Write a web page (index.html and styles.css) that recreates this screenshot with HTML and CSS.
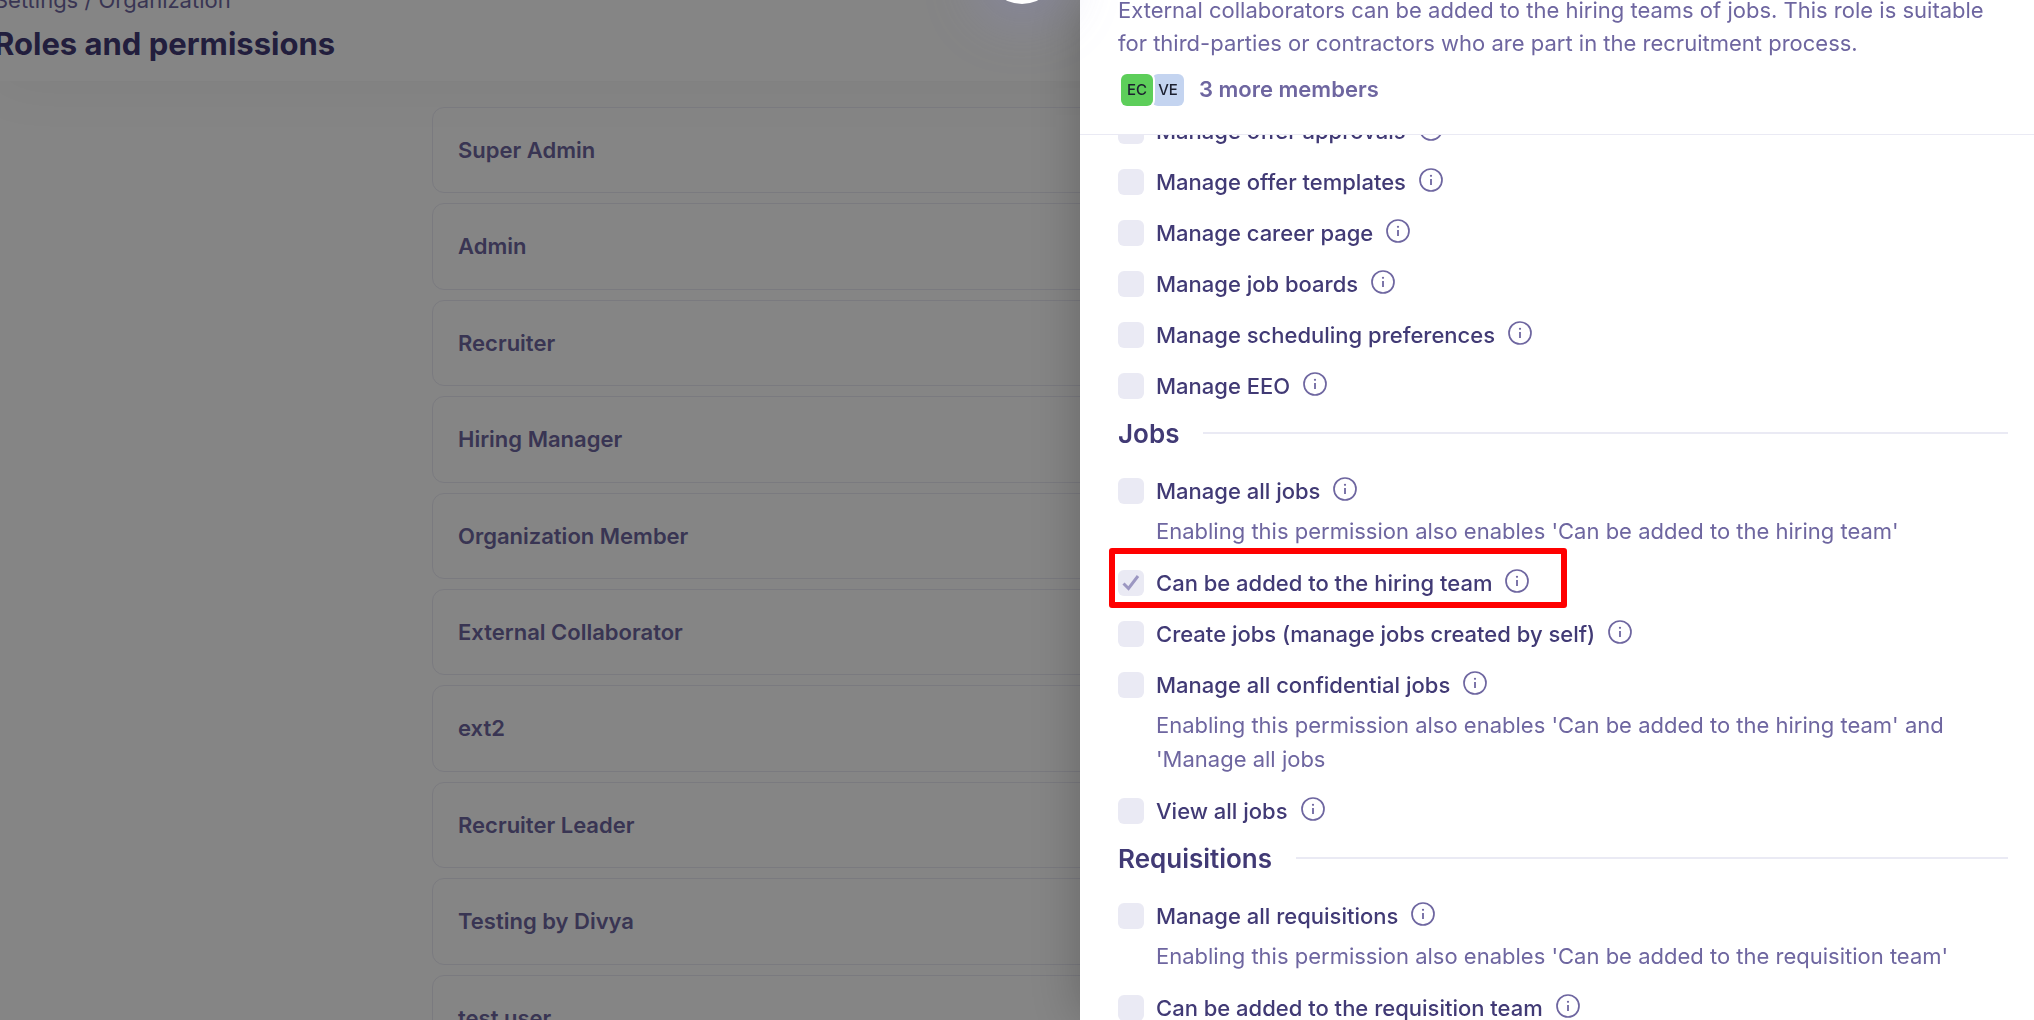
FILE: index.html
```html
<!DOCTYPE html>
<html lang="en">
<head>
  <meta charset="UTF-8" />
  <meta name="viewport" content="width=device-width, initial-scale=1.0" />
  <title>Roles and permissions</title>

  <link rel="stylesheet" href="styles.css">
</head>

<body>
  <svg class="sprite" aria-hidden="true">
    <symbol id="info" viewBox="0 0 24 24">
      <circle cx="12" cy="12" r="11" fill="none" stroke="currentColor" stroke-width="1.7" />
      <circle cx="12" cy="7.8" r="1.1" fill="currentColor" />
      <path d="M12 11v6" fill="none" stroke="currentColor" stroke-width="1.8" />
    </symbol>
  </svg>

  <div class="page">
    <header class="page-header">
      <nav class="breadcrumb"><a href="#">Settings</a> / <a href="#">Organization</a></nav>
      <h1>Roles and permissions</h1>
    </header>

    <main class="role-list">
      <a class="role-card" href="#">Super Admin</a>
      <a class="role-card" href="#">Admin</a>
      <a class="role-card" href="#">Recruiter</a>
      <a class="role-card" href="#">Hiring Manager</a>
      <a class="role-card" href="#">Organization Member</a>
      <a class="role-card" href="#">External Collaborator</a>
      <a class="role-card" href="#">ext2</a>
      <a class="role-card" href="#">Recruiter Leader</a>
      <a class="role-card" href="#">Testing by Divya</a>
      <a class="role-card" href="#">test user</a>
    </main>
  </div>

  <div class="overlay">
    <aside class="drawer">
      <button class="close-button" aria-label="Close"></button>

      <header class="drawer-header">
        <p>External collaborators can be added to the hiring teams of jobs. This role is suitable for third-parties or contractors who are part in the recruitment process.</p>
        <div class="members">
          <span class="avatar avatar-green">EC</span>
          <span class="avatar avatar-blue">VE</span>
          <a class="more-members" href="#">3 more members</a>
        </div>
      </header>

      <div class="permissions">
        <div class="permission">
          <input type="checkbox" id="offer-approvals" disabled>
          <label for="offer-approvals">Manage offer approvals</label>
          <svg class="info"><use href="#info" /></svg>
        </div>
        <div class="permission">
          <input type="checkbox" id="offer-templates" disabled>
          <label for="offer-templates">Manage offer templates</label>
          <svg class="info"><use href="#info" /></svg>
        </div>
        <div class="permission">
          <input type="checkbox" id="career-page" disabled>
          <label for="career-page">Manage career page</label>
          <svg class="info"><use href="#info" /></svg>
        </div>
        <div class="permission">
          <input type="checkbox" id="job-boards" disabled>
          <label for="job-boards">Manage job boards</label>
          <svg class="info"><use href="#info" /></svg>
        </div>
        <div class="permission">
          <input type="checkbox" id="scheduling" disabled>
          <label for="scheduling">Manage scheduling preferences</label>
          <svg class="info"><use href="#info" /></svg>
        </div>
        <div class="permission">
          <input type="checkbox" id="eeo" disabled>
          <label for="eeo">Manage EEO</label>
          <svg class="info"><use href="#info" /></svg>
        </div>

        <h2>Jobs</h2>
        <div class="permission">
          <input type="checkbox" id="all-jobs" disabled>
          <label for="all-jobs">Manage all jobs</label>
          <svg class="info"><use href="#info" /></svg>
        </div>
        <p class="hint">Enabling this permission also enables 'Can be added to the hiring team'</p>
        <div class="permission highlighted">
          <input type="checkbox" id="hiring-team" checked disabled>
          <label for="hiring-team">Can be added to the hiring team</label>
          <svg class="info"><use href="#info" /></svg>
        </div>
        <div class="permission">
          <input type="checkbox" id="create-jobs" disabled>
          <label for="create-jobs">Create jobs (manage jobs created by self)</label>
          <svg class="info"><use href="#info" /></svg>
        </div>
        <div class="permission">
          <input type="checkbox" id="confidential-jobs" disabled>
          <label for="confidential-jobs">Manage all confidential jobs</label>
          <svg class="info"><use href="#info" /></svg>
        </div>
        <p class="hint">Enabling this permission also enables 'Can be added to the hiring team' and 'Manage all jobs</p>
        <div class="permission">
          <input type="checkbox" id="view-jobs" disabled>
          <label for="view-jobs">View all jobs</label>
          <svg class="info"><use href="#info" /></svg>
        </div>

        <h2>Requisitions</h2>
        <div class="permission">
          <input type="checkbox" id="all-requisitions" disabled>
          <label for="all-requisitions">Manage all requisitions</label>
          <svg class="info"><use href="#info" /></svg>
        </div>
        <p class="hint">Enabling this permission also enables 'Can be added to the requisition team'</p>
        <div class="permission">
          <input type="checkbox" id="requisition-team" disabled>
          <label for="requisition-team">Can be added to the requisition team</label>
          <svg class="info"><use href="#info" /></svg>
        </div>
      </div>
    </aside>
  </div>
</body>
</html>
```

FILE: styles.css
```css
:root {
  --text-dark: #413a75;
  --text-muted: #6e66a0;
  --line: #eaeaf4;
}

* {
  box-sizing: border-box;
}

body {
  margin: 0;
  height: 100vh;
  overflow: hidden;
  background: #fff;
  color: var(--text-muted);
  font-family: Inter, sans-serif;
  font-size: 22px;
}

a {
  color: inherit;
  text-decoration: none;
}

h1, h2, p {
  margin: 0;
}

.sprite {
  display: none;
}

/* page behind the drawer */
.page-header {
  margin: -16px 0 0 -6px;
  padding-bottom: 13px;
  box-shadow: 0 4px 60px rgba(0, 0, 0, 0.05);
}

.breadcrumb {
  line-height: 33px;
}

h1 {
  margin-top: 3px;
  color: var(--text-dark);
  font-size: 31px;
  font-weight: 700;
  line-height: 48px;
}

.role-list {
  display: flex;
  flex-direction: column;
  gap: 10px;
  max-width: 1170px;
  margin: 26px auto 0;
}

.role-card {
  padding: 29px 25px;
  border: 1px solid var(--line);
  border-radius: 12px;
  font-weight: 600;
  line-height: 1.2;
}

/* drawer */
.overlay {
  position: fixed;
  inset: 0;
  display: flex;
  justify-content: flex-end;
  background: rgba(0, 0, 0, 0.48);
}

.drawer {
  position: relative;
  display: flex;
  flex-direction: column;
  width: 954px;
  background: #fff;
  box-shadow: 0 0 50px rgba(0, 0, 0, 0.25);
}

.close-button {
  position: absolute;
  top: -72px;
  left: -96px;
  width: 76px;
  height: 76px;
  border: none;
  border-radius: 50%;
  background: #fff;
  box-shadow: 0 10px 60px rgba(140, 140, 220, 0.4);
}

.drawer-header {
  margin-top: -6px;
  padding: 0 20px 28px 38px;
  border-bottom: 1px solid var(--line);
  line-height: 33px;
}

.members {
  display: flex;
  align-items: center;
  margin-top: 13px;
  padding-left: 3px;
}

.avatar {
  width: 32px;
  height: 32px;
  border-radius: 6px;
  color: #1c2030;
  font-size: 15px;
  font-weight: 500;
  line-height: 32px;
  text-align: center;
}

.avatar-green {
  z-index: 1;
  background: #5dce5a;
  box-shadow: 0 0 0 2px #fff;
}

.avatar-blue {
  margin-left: -1px;
  background: #c4d4f0;
}

.more-members {
  margin-left: 15px;
  font-weight: 600;
}

.permissions {
  flex: 1;
  overflow: hidden;
  padding: 0 26px 0 38px;
}

.permission {
  display: flex;
  align-items: center;
  height: 26px;
  margin-bottom: 25px;
  color: var(--text-dark);
  font-weight: 500;
}

/* list is scrolled, the first row is partly hidden */
.permission:first-child {
  margin-top: -17px;
}

.permission input {
  appearance: none;
  width: 26px;
  height: 26px;
  margin: 0 12px 0 0;
  border-radius: 6px;
  background: var(--line);
}

.permission input:checked {
  background: var(--line) url("data:image/svg+xml,%3Csvg xmlns='http://www.w3.org/2000/svg' viewBox='0 0 26 26'%3E%3Cpath d='M5.5 13.5l5 5L20 6' fill='none' stroke='%239c97c2' stroke-width='3'/%3E%3C/svg%3E");
}

.info {
  width: 24px;
  height: 24px;
  margin: 0 0 5px 13px;
  color: var(--text-muted);
}

.hint {
  margin: -15px 0 22px 38px;
  line-height: 34px;
}

.highlighted {
  position: relative;
  width: fit-content;
}

.highlighted::before {
  content: "";
  position: absolute;
  inset: -22px -38px -12px -9px;
  border: 6px solid #f00;
  border-radius: 3px;
  pointer-events: none;
}

h2 {
  display: flex;
  align-items: center;
  gap: 24px;
  height: 32px;
  margin: -7px 0 29px;
  color: var(--text-dark);
  font-size: 26px;
  font-weight: 600;
}

h2::after {
  content: "";
  flex: 1;
  height: 2px;
  background: var(--line);
}
```
